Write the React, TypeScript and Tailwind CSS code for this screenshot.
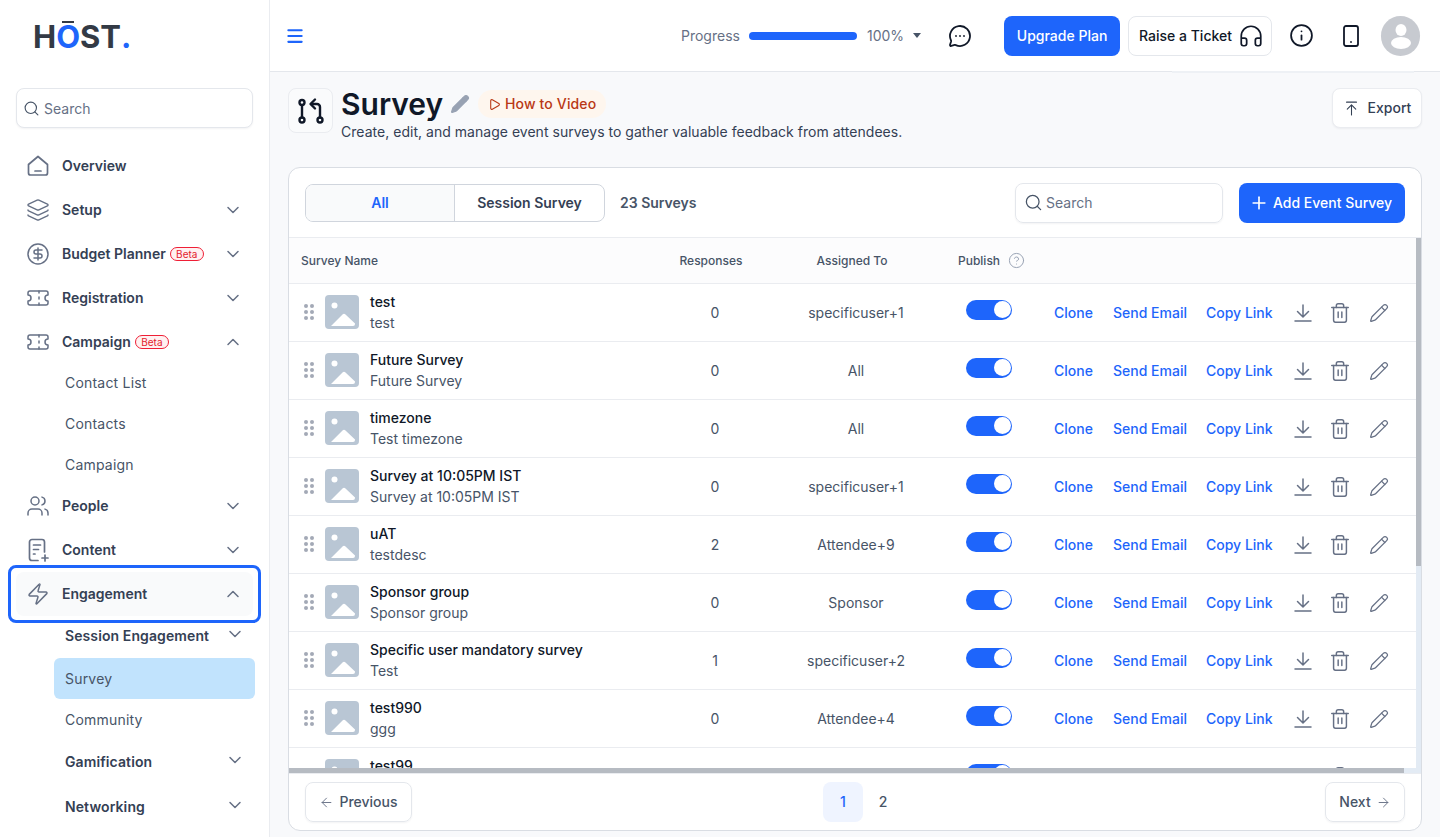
import React from "react";
import { ArrowLeft, ArrowRight, ArrowUpToLine, ChevronDown, ChevronUp, CircleDollarSign, CircleHelp, Headphones, Info, Layers, Menu, MessageCircleMore, Pencil, Play, Plus, Search, Smartphone, Ticket, Trash2, Users, Zap } from "lucide-react";

const Beta = () => (
  <span className="ml-1 flex h-[14px] w-[34px] items-center justify-center rounded-full border border-[#ef1f36] bg-[#fff1f1] text-[10px] font-normal leading-none text-[#e31b2e]">Beta</span>
);

const HomeIcon = () => (
  <svg width="24" height="24" viewBox="0 0 24 24" fill="none" stroke="#667085" strokeWidth="1.7" strokeLinejoin="round" strokeLinecap="round">
    <path d="M2.5 10.5 12 2.5l9.5 8V19a2 2 0 0 1-2 2h-15a2 2 0 0 1-2-2z" />
    <path d="M9 17h6" />
  </svg>
);

const ContentIcon = () => (
  <svg width="24" height="24" viewBox="0 0 24 24" fill="none" stroke="#667085" strokeWidth="1.7" strokeLinejoin="round" strokeLinecap="round">
    <path d="M12 22.5H6a2.5 2.5 0 0 1-2.500-2.500V4A2.500 2.500 0 0 1 6 1.500h10A2.500 2.500 0 0 1 18.500 4v10" />
    <path d="M7.500 7h7M7.500 11.500h5M7.500 16h1.500M19 17v6M16 20h6" />
  </svg>
);

const SurveyIcon = () => (
  <svg width="28" height="28" viewBox="0 0 28 28" fill="none" stroke="#101828" strokeWidth="2.400" strokeLinecap="round" strokeLinejoin="round">
    <circle cx="5" cy="5.500" r="2.500" />
    <circle cx="5" cy="23" r="2.500" />
    <circle cx="23" cy="23" r="2.500" />
    <path d="M5 8v12.500" />
    <path d="M23 20.500V10a3 3 0 0 0-3-3h-5" />
    <path d="M18 2.500 13.500 7l4.500 4.500" />
  </svg>
);

function NavItem({ icon, label, beta, open, chevron = true }: { icon: React.ReactNode; label: string; beta?: boolean; open?: boolean; chevron?: boolean }) {
  return (
    <div className="flex h-11 w-[237px] items-center rounded-lg pl-[10px] pr-[10px]">
      <span className="flex w-6 shrink-0 items-center justify-center text-[#667085]">{icon}</span>
      <span className="ml-3 text-sm font-semibold text-[#344054]">{label}</span>
      {beta && <Beta />}
      {chevron && (
        <span className="ml-auto text-[#667085]">
          {open ? <ChevronUp size={20} strokeWidth={1.8} /> : <ChevronDown size={20} strokeWidth={1.8} />}
        </span>
      )}
    </div>
  );
}

const SubItem = ({ label, active }: { label: string; active?: boolean }) => (
  <div className={`ml-[54px] flex h-[41px] w-[201px] items-center rounded-md pl-[11px] text-sm tracking-[0.2px] text-[#475467] ${active ? "bg-[#c1e3fd]" : ""}`}>{label}</div>
);

const SubGroup = ({ label, h }: { label: string; h: string }) => (
  <div className={`ml-[54px] flex w-[191px] items-center justify-between pl-[11px] text-sm font-semibold tracking-[0.1px] text-[#344054] ${h}`}>
    <span>{label}</span>
    <ChevronDown size={20} strokeWidth={1.8} className="-mt-1 text-[#667085]" />
  </div>
);

function Sidebar() {
  return (
    <aside className="flex w-[270px] shrink-0 flex-col overflow-hidden border-r border-[#eaecf0] bg-white">
      <div className="flex h-[88px] items-start pl-[33px] pt-[17px]">
        <div className="flex items-baseline text-[31px] font-bold leading-[40px] text-[#333a45]">
          <span>H</span>
          <span className="relative text-[#1e65fb]">
            O
            <span className="absolute left-[6px] right-[6px] top-[4px] h-[2px] bg-[#333a45]" />
          </span>
          <span>ST</span>
          <span className="text-[#1e65fb]">.</span>
        </div>
      </div>
      <div className="mx-4 mb-4 flex h-10 w-[237px] items-center gap-1 rounded-lg border border-[#e4e7ec] bg-white pl-[6px] shadow-[0_1px_2px_rgba(16,24,40,0.05)]">
        <Search size={17} strokeWidth={1.6} className="text-[#475467]" />
        <span className="mt-[2px] text-sm text-[#667085]">Search</span>
      </div>
      <div className="pl-4">
        <NavItem icon={<HomeIcon />} label="Overview" chevron={false} />
        <NavItem icon={<Layers size={26} strokeWidth={1.4} />} label="Setup" />
        <NavItem icon={<CircleDollarSign size={26} strokeWidth={1.5} />} label="Budget Planner" beta />
        <NavItem icon={<Ticket size={26} strokeWidth={1.5} />} label="Registration" />
        <NavItem icon={<Ticket size={26} strokeWidth={1.5} />} label="Campaign" beta open />
      </div>
      <div className="-mb-px -mt-[2px]">
        <SubItem label="Contact List" />
        <SubItem label="Contacts" />
        <SubItem label="Campaign" />
      </div>
      <div className="pl-4">
        <NavItem icon={<Users size={26} strokeWidth={1.5} />} label="People" />
        <NavItem icon={<ContentIcon />} label="Content" />
      </div>
      <div className="relative z-10 -my-[7px] ml-2 w-[253px] rounded-lg border-[3px] border-[#1e65fb] py-1 pl-[5px]">
        <div className="w-[237px] rounded-lg bg-[#f9fafb]">
          <NavItem icon={<Zap size={24} strokeWidth={1.5} />} label="Engagement" open />
        </div>
      </div>
      <SubGroup label="Session Engagement" h="h-[42px] pb-[2px]" />
      <SubItem label="Survey" active />
      <SubItem label="Community" />
      <SubGroup label="Gamification" h="h-[44px]" />
      <div className="mt-px">
        <SubGroup label="Networking" h="h-[44px]" />
      </div>
    </aside>
  );
}

function TopBar() {
  return (
    <header className="relative flex h-[72px] shrink-0 items-center border-b border-[#e4e7ec] bg-white">
      <Menu size={20} strokeWidth={2.500} className="ml-[15px] text-[#1e65fb]" />
      <span className="ml-[376px] text-sm text-[#667085]">Progress</span>
      <div className="ml-[9px] h-2 w-[108px] rounded-full bg-[#1e65fb]" />
      <span className="ml-[10px] text-sm text-[#667085]">100%</span>
      <span className="ml-[9px] h-0 w-0 border-x-4 border-t-[5px] border-x-transparent border-t-[#475467]" />
      <MessageCircleMore size={24} strokeWidth={1.8} className="ml-[27px] text-[#101828]" />
      <button className="ml-[32px] h-10 w-[116px] rounded-lg bg-[#1e65fb] text-sm font-medium text-white">Upgrade Plan</button>
      <button className="ml-2 flex h-10 w-[144px] items-center justify-start gap-[6px] rounded-lg border border-[#e4e7ec] bg-white pl-[10px] text-sm font-medium text-[#101828]">
        Raise a Ticket
        <Headphones size={26} strokeWidth={1.6} />
      </button>
      <Info size={25} strokeWidth={1.7} className="ml-[17px] text-[#101828]" />
      <Smartphone size={24} strokeWidth={1.8} className="ml-[25px] text-[#101828]" />
      <div className="ml-[18px] flex h-10 w-[39px] items-center justify-center overflow-hidden rounded-full bg-[#c7cad0]">
        <svg width="24" height="28" viewBox="0 0 24 28" fill="#fff">
          <ellipse cx="12" cy="8" rx="5.500" ry="6" />
          <ellipse cx="12" cy="21" rx="10" ry="6" />
        </svg>
      </div>
      <div className="absolute bottom-[-2px] right-[26px] h-[2px] w-[242px] bg-[#eef1f5]" />
    </header>
  );
}

const DragDots = () => (
  <svg width="10" height="16" viewBox="0 0 10 16" fill="#a3a9b6">
    {[2, 8, 14].map((y) => (
      <g key={y}>
        <circle cx="2" cy={y} r="2" />
        <circle cx="8" cy={y} r="2" />
      </g>
    ))}
  </svg>
);

const Thumb = () => (
  <svg width="34" height="34" viewBox="0 0 34 34" className="block shrink-0">
    <rect width="34" height="34" rx="4" fill="#b9c6d4" />
    <circle cx="9.500" cy="10.500" r="3" fill="#fff" />
    <path d="M6 31 17.500 19.500a2 2 0 0 1 3 0L30 28.500v.5a2 2 0 0 1-2 2z" fill="#fff" />
  </svg>
);

const DownloadIcon = () => (
  <svg width="20" height="20" viewBox="0 0 20 20" fill="none" stroke="#667085" strokeWidth="1.500" strokeLinecap="round" strokeLinejoin="round">
    <path d="M10 2v11.500M4.500 8.500 10 14l5.500-5.500M2 18h16" />
  </svg>
);

const rows = [
  ["test", "test", "0", "specificuser+1"],
  ["Future Survey", "Future Survey", "0", "All"],
  ["timezone", "Test timezone", "0", "All"],
  ["Survey at 10:05PM IST", "Survey at 10:05PM IST", "0", "specificuser+1"],
  ["uAT", "testdesc", "2", "Attendee+9"],
  ["Sponsor group", "Sponsor group", "0", "Sponsor"],
  ["Specific user mandatory survey", "Test", "1", "specificuser+2"],
  ["test990", "ggg", "0", "Attendee+4"],
  ["test99", "test99", "0", "All"],
];

const gridCols = "grid grid-cols-[361px_130px_152px_122px_1fr]";

function Row({ r }: { r: string[] }) {
  return (
    <div className={`${gridCols} h-[58px] shrink-0 items-center border-b border-[#eaecf0]`}>
      <div className="flex items-center pb-[2px] pl-[15px]">
        <DragDots />
        <span className="ml-[11px]"><Thumb /></span>
        <div className="ml-[11px]">
          <div className="text-sm font-medium leading-[21px] text-[#101828]">{r[0]}</div>
          <div className="text-sm leading-[21px] text-[#475467]">{r[1]}</div>
        </div>
      </div>
      <div className="text-center text-sm text-[#475467]">{r[2]}</div>
      <div className="text-center text-sm text-[#475467]">{r[3]}</div>
      <div className="pb-[6px] pl-[34px]">
        <div className="flex h-5 w-[46px] items-center justify-end rounded-full bg-[#1e65fb] pr-px">
          <span className="h-[17px] w-[17px] rounded-full bg-white" />
        </div>
      </div>
      <div className="flex items-center text-sm font-medium text-[#1e65fb]">
        <span className="w-[59px]">Clone</span>
        <span className="w-[93px]">Send Email</span>
        <span className="w-[82px]">Copy Link</span>
        <span className="flex w-[30px] justify-center"><DownloadIcon /></span>
        <Trash2 size={22} strokeWidth={1.600} className="ml-[11px] text-[#667085]" />
        <Pencil size={20} strokeWidth={1.500} className="ml-[18px] text-[#667085]" />
      </div>
    </div>
  );
}

function SurveyCard() {
  return (
    <section className="flex h-[664px] w-[1134px] flex-col overflow-hidden rounded-xl border border-[#d9dde3] bg-white">
      <div className="flex h-[70px] shrink-0 items-center border-b border-[#eaecf0] pl-4 pr-4">
        <div className="flex h-[38px] w-[300px] overflow-hidden rounded-lg border border-[#d0d5dd] text-sm font-semibold">
          <div className="flex w-[149px] items-center justify-center border-r border-[#d0d5dd] bg-[#f9fafb] text-[#1e65fb]">All</div>
          <div className="flex flex-1 items-center justify-center text-[#344054]">Session Survey</div>
        </div>
        <span className="ml-[15px] text-sm font-semibold text-[#475467]">23 Surveys</span>
        <div className="ml-auto flex h-10 w-[208px] items-center gap-[3px] rounded-lg border border-[#e4e7ec] pl-2 shadow-[0_1px_2px_rgba(16,24,40,0.05)]">
          <Search size={19} strokeWidth={1.6} className="text-[#475467]" />
          <span className="text-sm text-[#667085]">Search</span>
        </div>
        <button className="ml-4 flex h-10 w-[166px] items-center justify-start gap-1 rounded-lg bg-[#1e65fb] pl-[10px] text-sm font-medium text-white">
          <Plus size={20} strokeWidth={2} />
          Add Event Survey
        </button>
      </div>
      <div className="relative h-[535px] shrink-0 overflow-hidden">
        <div className={`${gridCols} h-[46px] items-center border-b border-[#eaecf0] bg-[#fcfcfd] text-xs font-medium text-[#475467]`}>
          <div className="pl-3">Survey Name</div>
          <div className="pr-2 text-center">Responses</div>
          <div className="pr-2 text-center">Assigned To</div>
          <div className="flex items-center gap-2 pl-[26px]">
            Publish
            <CircleHelp size={17} strokeWidth={1.4} className="text-[#98a2b3]" />
          </div>
          <div />
        </div>
        {rows.map((r) => (
          <Row key={r[0]} r={r} />
        ))}
        <div className="absolute bottom-0 left-0 h-[5px] w-[1127px] bg-[#e3ebf4]">
          <div className="h-full w-[1115px] bg-[#b6bbc2]" />
        </div>
        <div className="absolute right-0 top-0 h-[535px] w-[5px] bg-[#e3ebf4]">
          <div className="h-[328px] w-full bg-[#b6bbc2]" />
        </div>
      </div>
      <div className="relative flex flex-1 items-center justify-between border-t border-[#eaecf0] pl-4 pr-4">
        <button className="flex h-10 w-[107px] items-center justify-center gap-[5px] rounded-lg border border-[#e4e7ec] text-sm font-medium text-[#475467] shadow-[0_1px_2px_rgba(16,24,40,0.05)]">
          <ArrowLeft size={15} strokeWidth={1.5} className="text-[#667085]" />
          Previous
        </button>
        <div className="absolute left-[534px] flex items-center text-sm">
          <span className="flex h-10 w-10 items-center justify-center rounded-lg bg-[#eff4ff] font-medium text-[#1e65fb]">1</span>
          <span className="flex h-10 w-10 items-center justify-center font-medium text-[#475467]">2</span>
        </div>
        <button className="flex h-10 w-20 items-center justify-center gap-[5px] rounded-lg border border-[#e4e7ec] text-sm font-medium text-[#475467] shadow-[0_1px_2px_rgba(16,24,40,0.05)]">
          Next
          <ArrowRight size={15} strokeWidth={1.5} className="text-[#667085]" />
        </button>
      </div>
    </section>
  );
}

export default function App() {
  return (
    <div className="flex h-[837px] w-[1440px] overflow-hidden bg-[#f8f9fb] font-['Inter',sans-serif]">
      <Sidebar />
      <main className="flex min-w-0 flex-1 flex-col">
        <TopBar />
        <div className="pl-[18px] pr-[18px] pt-4">
          <div className="flex h-[79px] items-start">
            <div className="flex h-[45px] w-[45px] items-center justify-center rounded-lg border border-[#eaecf0] bg-[#fafbfc]">
              <SurveyIcon />
            </div>
            <div className="ml-2 flex-1">
              <div className="flex h-8 items-center">
                <h1 className="text-[30px] font-semibold leading-8 text-[#101828]">Survey</h1>
                <Pencil size={20} fill="#98a2b3" strokeWidth={1.5} className="ml-[7px] text-[#98a2b3]" />
                <span className="ml-[8px] flex h-7 w-[128px] items-center justify-center gap-1 rounded-full bg-[#fef6ee] text-sm font-medium tracking-[0.15px] text-[#b93815]">
                  <Play size={13} strokeWidth={2} />
                  How to Video
                </span>
              </div>
              <p className="mt-[2px] text-sm leading-5 tracking-[0.025px] text-[#344054]">Create, edit, and manage event surveys to gather valuable feedback from attendees.</p>
            </div>
            <button className="flex h-10 w-[90px] items-center justify-center gap-2 rounded-lg border border-[#eaecf0] bg-white text-sm font-medium text-[#344054] shadow-[0_1px_2px_rgba(16,24,40,0.05)]">
              <ArrowUpToLine size={17} strokeWidth={1.5} />
              Export
            </button>
          </div>
          <SurveyCard />
        </div>
      </main>
    </div>
  );
}
